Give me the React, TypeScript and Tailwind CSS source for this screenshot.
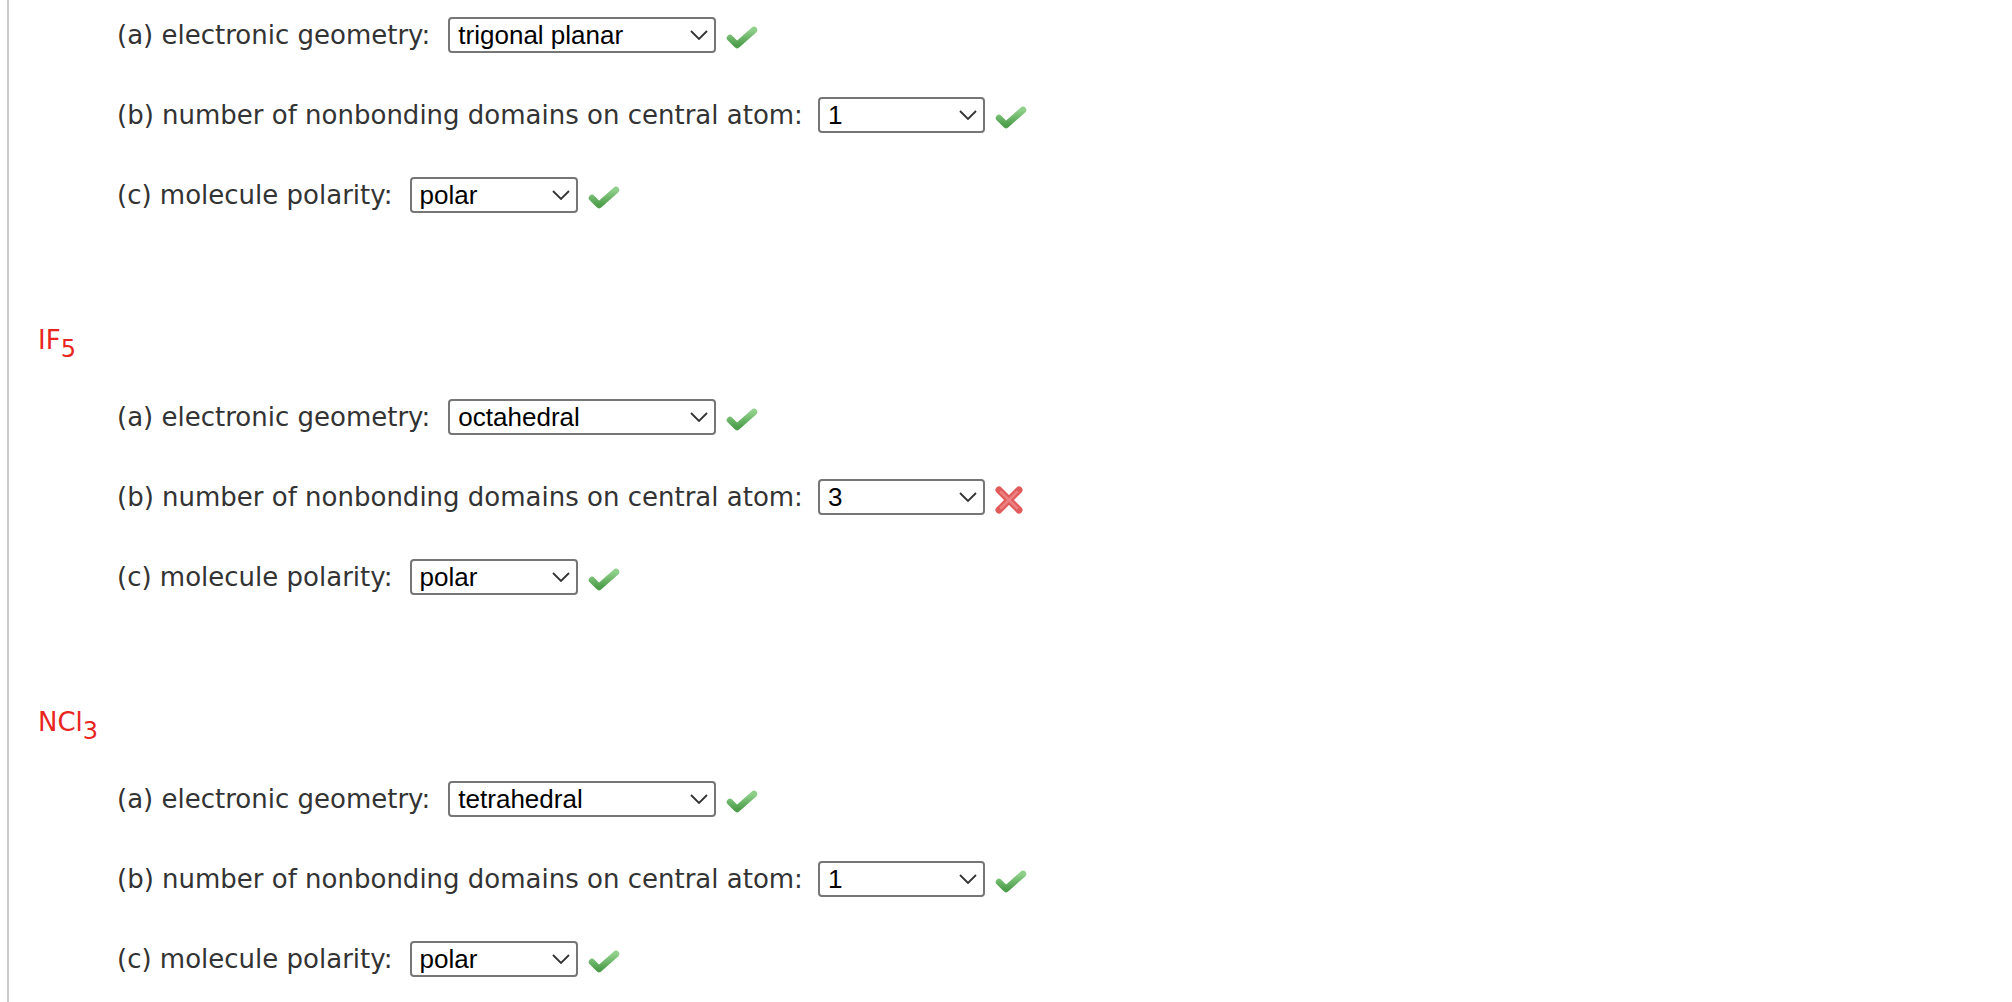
import React from "react";

type Mark = "correct" | "wrong";

interface Question {
  label: string;
  value: string;
  width: string;
  gap: string;
  mark: Mark;
}

interface Molecule {
  name?: string;
  sub?: string;
  questions: Question[];
}

const qa = (value: string, mark: Mark = "correct"): Question => ({
  label: "(a) electronic geometry:",
  value,
  width: "w-[268px]",
  gap: "mr-[18px]",
  mark,
});
const qb = (value: string, mark: Mark = "correct"): Question => ({
  label: "(b) number of nonbonding domains on central atom:",
  value,
  width: "w-[167px]",
  gap: "mr-[15px]",
  mark,
});
const qc = (value: string, mark: Mark = "correct"): Question => ({
  label: "(c) molecule polarity:",
  value,
  width: "w-[168px]",
  gap: "mr-[17px]",
  mark,
});

const molecules: Molecule[] = [
  { questions: [qa("trigonal planar"), qb("1"), qc("polar")] },
  { name: "IF", sub: "5", questions: [qa("octahedral"), qb("3", "wrong"), qc("polar")] },
  { name: "NCl", sub: "3", questions: [qa("tetrahedral"), qb("1"), qc("polar")] },
];

function CheckIcon() {
  return (
    <svg width="32" height="24" viewBox="0 0 32 24" className="ml-[10px] mt-[4px]">
      <defs>
        <linearGradient id="chk" x1="0" y1="0" x2="0" y2="1">
          <stop offset="0" stopColor="#8fd08a" />
          <stop offset="1" stopColor="#4e9e4c" />
        </linearGradient>
      </defs>
      <polyline
        points="4,13 11,20 28,5"
        fill="none"
        stroke="url(#chk)"
        strokeWidth="6.5"
        strokeLinecap="round"
        strokeLinejoin="round"
      />
    </svg>
  );
}

function CrossIcon() {
  return (
    <svg width="32" height="32" viewBox="0 0 32 32" className="ml-[8px] mt-[6px]">
      <g stroke="#e25b5b" strokeWidth="7" strokeLinecap="round">
        <line x1="6" y1="6" x2="26" y2="26" />
        <line x1="26" y1="6" x2="6" y2="26" />
      </g>
      <g stroke="#ec8080" strokeWidth="2.5" strokeLinecap="round">
        <line x1="8" y1="8" x2="24" y2="24" />
        <line x1="24" y1="8" x2="8" y2="24" />
      </g>
    </svg>
  );
}

function FakeSelect({ value, width }: { value: string; width: string }) {
  return (
    <div
      className={`${width} h-9 flex items-center justify-between border-2 border-[#767676] rounded-[4px] bg-white pl-[8px] pr-[6px]`}
    >
      <span className="text-[26px] leading-none text-black font-['Liberation_Sans',Arial,sans-serif]">
        {value}
      </span>
      <svg width="18" height="10" viewBox="0 0 18 10">
        <polyline points="1,1 9,9 17,1" fill="none" stroke="#333333" strokeWidth="1.8" />
      </svg>
    </div>
  );
}

export default function App() {
  return (
    <div className="h-[1002px] overflow-hidden bg-white pl-[7px] font-['DejaVu_Sans',Verdana,sans-serif] text-[#333333]">
      <div className="h-full border-l-2 border-[#cccccc] pl-[29px] pt-[17px] flex flex-col gap-[112px]">
        {molecules.map((m, i) => (
          <div key={i} className="flex flex-col gap-[44px]">
            {m.name && (
              <div className="h-[30px] text-[26px] leading-[30px] text-[#e8261f]">
                {m.name}
                <span className="relative top-[8px] text-[24px] leading-none">{m.sub}</span>
              </div>
            )}
            {m.questions.map((q, j) => (
              <div key={j} className="ml-[79px] h-9 flex items-center">
                <span className={`text-[26px] leading-none ${q.gap}`}>{q.label}</span>
                <FakeSelect value={q.value} width={q.width} />
                {q.mark === "correct" ? <CheckIcon /> : <CrossIcon />}
              </div>
            ))}
          </div>
        ))}
      </div>
    </div>
  );
}
